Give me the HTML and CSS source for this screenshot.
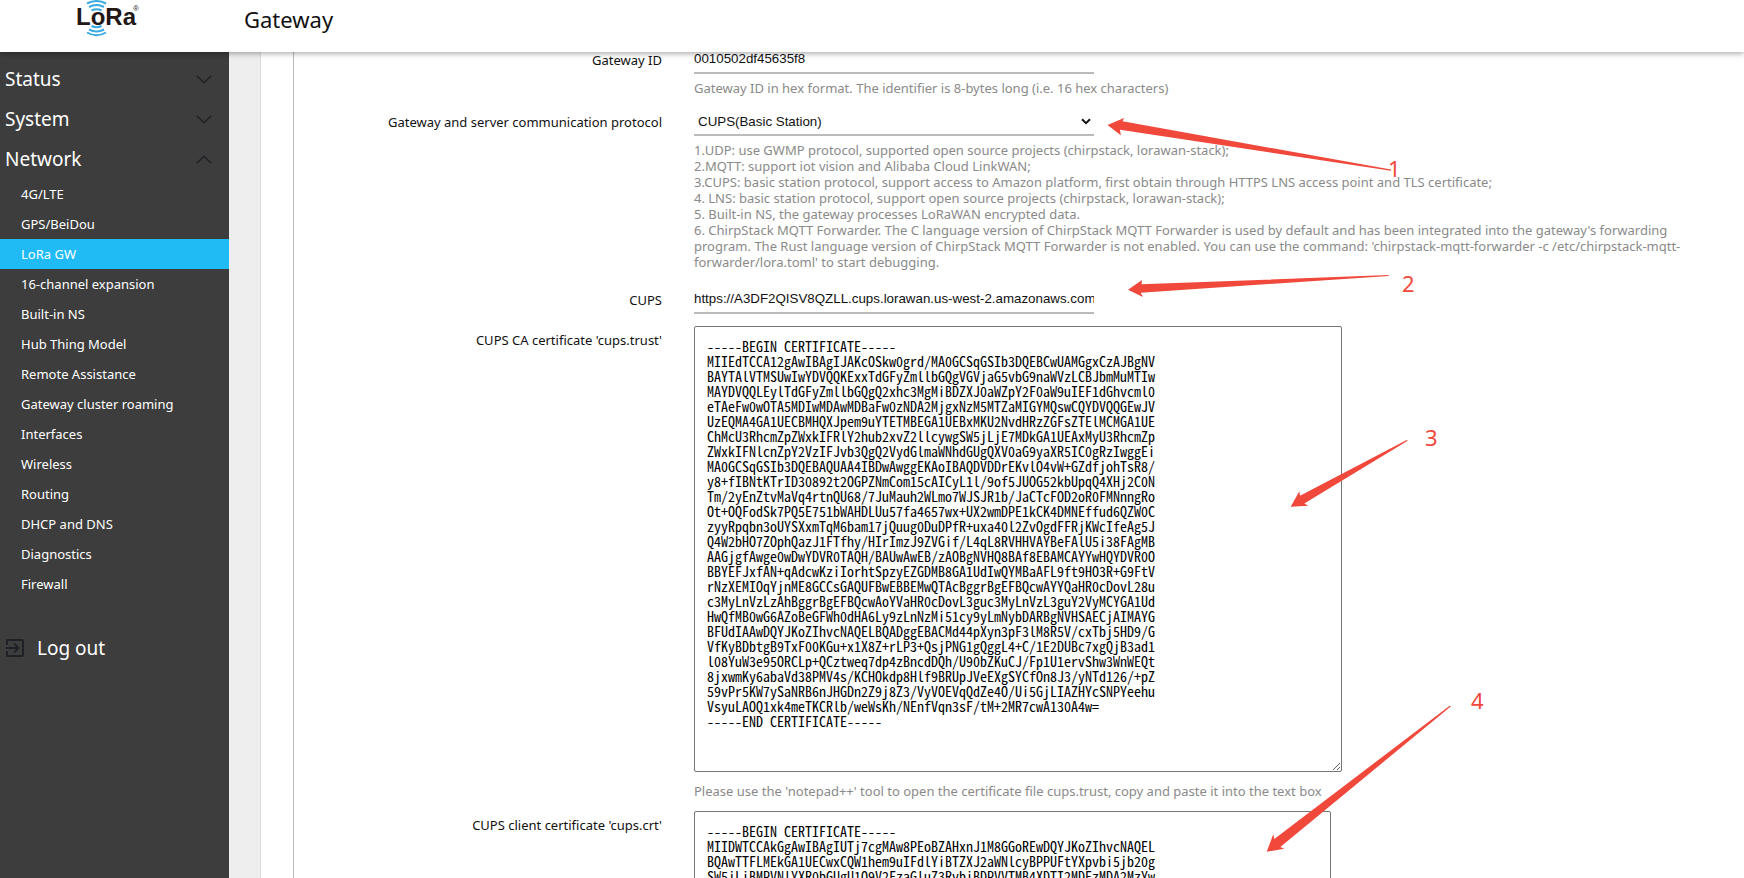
FILE: index.html
```html
<!DOCTYPE html>
<html lang="en">
<head>
<meta charset="utf-8">
<title>Gateway</title>
<link rel="stylesheet" href="styles.css">
</head>
<body>
<header class="topbar">
  <a class="brand" href="#" aria-label="LoRa home">
    <svg width="68" height="40" viewBox="0 0 68 40">
      <g fill="none" stroke="#3aaae0" stroke-width="2">
        <path d="M11 3.500Q20.500-1.500 30 3.500"/>
        <path d="M13 7Q20.500 3 28 7"/>
        <path d="M15.500 10.500Q20.500 8 25.500 10.500"/>
        <path d="M15.500 26Q20.500 28.500 25.500 26"/>
        <path d="M13 29.500Q20.500 33.500 28 29.500"/>
        <path d="M11 32.500Q20.500 38 30 32.500"/>
      </g>
      <text class="brand-name" x="0" y="25">LoRa</text>
      <text class="brand-mark" x="57" y="11">®</text>
    </svg>
  </a>
  <h1 class="title">Gateway</h1>
</header>
<div class="shell">
  <nav class="sidebar">
    <button class="group" type="button">Status<svg class="chev" viewBox="0 0 16 9"><path d="M.7.7 8 7.800 15.300.7"/></svg></button>
    <button class="group" type="button">System<svg class="chev" viewBox="0 0 16 9"><path d="M.7.7 8 7.800 15.300.7"/></svg></button>
    <button class="group" type="button">Network<svg class="chev" viewBox="0 0 16 9"><path d="M.7 8.300 8 1.200 15.300 8.300"/></svg></button>
    <ul class="items">
      <li><a href="#">4G/LTE</a></li>
      <li><a href="#">GPS/BeiDou</a></li>
      <li><a class="active" href="#">LoRa GW</a></li>
      <li><a href="#">16-channel expansion</a></li>
      <li><a href="#">Built-in NS</a></li>
      <li><a href="#">Hub Thing Model</a></li>
      <li><a href="#">Remote Assistance</a></li>
      <li><a href="#">Gateway cluster roaming</a></li>
      <li><a href="#">Interfaces</a></li>
      <li><a href="#">Wireless</a></li>
      <li><a href="#">Routing</a></li>
      <li><a href="#">DHCP and DNS</a></li>
      <li><a href="#">Diagnostics</a></li>
      <li><a href="#">Firewall</a></li>
    </ul>
    <a class="logout" href="#"><svg width="18" height="18" viewBox="0 0 18 18"><path d="M1 6V2q0-1 1-1h14q1 0 1 1v14q0 1-1 1H2q-1 0-1-1v-4M0 9h12M8 4.500 12.500 9 8 13.500"/></svg>Log out</a>
  </nav>
  <main class="page">
    <form class="panel">
      <div class="row">
        <label for="gwid">Gateway ID</label>
        <div class="field">
          <input class="line" id="gwid" type="text" value="0010502df45635f8">
          <p class="help">Gateway ID in hex format. The identifier is 8-bytes long (i.e. 16 hex characters)</p>
        </div>
      </div>
      <div class="row protocol">
        <label for="proto">Gateway and server communication protocol</label>
        <div class="field">
          <div class="select">
            <select class="line" id="proto"><option>CUPS(Basic Station)</option></select>
            <svg width="10" height="7" viewBox="0 0 10 7"><path d="M1 1.200 5 5.200 9 1.200"/></svg>
          </div>
          <p class="help">1.UDP: use GWMP protocol, supported open source projects (chirpstack, lorawan-stack);<br>2.MQTT: support iot vision and Alibaba Cloud LinkWAN;<br>3.CUPS: basic station protocol, support access to Amazon platform, first obtain through HTTPS LNS access point and TLS certificate;<br>4. LNS: basic station protocol, support open source projects (chirpstack, lorawan-stack);<br>5. Built-in NS, the gateway processes LoRaWAN encrypted data.<br>6. ChirpStack MQTT Forwarder. The C language version of ChirpStack MQTT Forwarder is used by default and has been integrated into the gateway's forwarding<br>program. The Rust language version of ChirpStack MQTT Forwarder is not enabled. You can use the command: 'chirpstack-mqtt-forwarder -c /etc/chirpstack-mqtt-<br>forwarder/lora.toml' to start debugging.</p>
        </div>
      </div>
      <div class="row server">
        <label for="cups">CUPS</label>
        <div class="field">
          <input class="line" id="cups" type="text" value="https://A3DF2QISV8QZLL.cups.lorawan.us-west-2.amazonaws.com:443">
        </div>
      </div>
      <div class="row cert">
        <label for="trust">CUPS CA certificate 'cups.trust'</label>
        <div class="field">
          <textarea id="trust" rows="28" spellcheck="false">-----BEGIN CERTIFICATE-----
MIIEdTCCA12gAwIBAgIJAKcOSkw0grd/MA0GCSqGSIb3DQEBCwUAMGgxCzAJBgNV
BAYTAlVTMSUwIwYDVQQKExxTdGFyZmllbGQgVGVjaG5vbG9naWVzLCBJbmMuMTIw
MAYDVQQLEylTdGFyZmllbGQgQ2xhc3MgMiBDZXJ0aWZpY2F0aW9uIEF1dGhvcml0
eTAeFw0wOTA5MDIwMDAwMDBaFw0zNDA2MjgxNzM5MTZaMIGYMQswCQYDVQQGEwJV
UzEQMA4GA1UECBMHQXJpem9uYTETMBEGA1UEBxMKU2NvdHRzZGFsZTElMCMGA1UE
ChMcU3RhcmZpZWxkIFRlY2hub2xvZ2llcywgSW5jLjE7MDkGA1UEAxMyU3RhcmZp
ZWxkIFNlcnZpY2VzIFJvb3QgQ2VydGlmaWNhdGUgQXV0aG9yaXR5IC0gRzIwggEi
MA0GCSqGSIb3DQEBAQUAA4IBDwAwggEKAoIBAQDVDDrEKvlO4vW+GZdfjohTsR8/
y8+fIBNtKTrID30892t2OGPZNmCom15cAICyL1l/9of5JUOG52kbUpqQ4XHj2C0N
Tm/2yEnZtvMaVq4rtnQU68/7JuMauh2WLmo7WJSJR1b/JaCTcFOD2oR0FMNnngRo
Ot+OQFodSk7PQ5E751bWAHDLUu57fa4657wx+UX2wmDPE1kCK4DMNEffud6QZW0C
zyyRpqbn3oUYSXxmTqM6bam17jQuug0DuDPfR+uxa40l2ZvOgdFFRjKWcIfeAg5J
Q4W2bHO7ZOphQazJ1FTfhy/HIrImzJ9ZVGif/L4qL8RVHHVAYBeFAlU5i38FAgMB
AAGjgfAwge0wDwYDVR0TAQH/BAUwAwEB/zAOBgNVHQ8BAf8EBAMCAYYwHQYDVR0O
BBYEFJxfAN+qAdcwKziIorhtSpzyEZGDMB8GA1UdIwQYMBaAFL9ft9HO3R+G9FtV
rNzXEMIOqYjnME8GCCsGAQUFBwEBBEMwQTAcBggrBgEFBQcwAYYQaHR0cDovL28u
c3MyLnVzLzAhBggrBgEFBQcwAoYVaHR0cDovL3guc3MyLnVzL3guY2VyMCYGA1Ud
HwQfMB0wG6AZoBeGFWh0dHA6Ly9zLnNzMi51cy9yLmNybDARBgNVHSAECjAIMAYG
BFUdIAAwDQYJKoZIhvcNAQELBQADggEBACMd44pXyn3pF3lM8R5V/cxTbj5HD9/G
VfKyBDbtgB9TxF00KGu+x1X8Z+rLP3+QsjPNG1gQggL4+C/1E2DUBc7xgQjB3ad1
l08YuW3e95ORCLp+QCztweq7dp4zBncdDQh/U90bZKuCJ/Fp1U1ervShw3WnWEQt
8jxwmKy6abaVd38PMV4s/KCHOkdp8Hlf9BRUpJVeEXgSYCfOn8J3/yNTd126/+pZ
59vPr5KW7ySaNRB6nJHGDn2Z9j8Z3/VyVOEVqQdZe4O/Ui5GjLIAZHYcSNPYeehu
VsyuLAOQ1xk4meTKCRlb/weWsKh/NEnfVqn3sF/tM+2MR7cwA130A4w=
-----END CERTIFICATE-----</textarea>
          <p class="help">Please use the 'notepad++' tool to open the certificate file cups.trust, copy and paste it into the text box</p>
        </div>
      </div>
      <div class="row cert">
        <label for="crt">CUPS client certificate 'cups.crt'</label>
        <div class="field">
          <textarea class="narrow" id="crt" rows="28" spellcheck="false">-----BEGIN CERTIFICATE-----
MIIDWTCCAkGgAwIBAgIUTj7cgMAw8PEoBZAHxnJ1M8GGoREwDQYJKoZIhvcNAQEL
BQAwTTFLMEkGA1UECwxCQW1hem9uIFdlYiBTZXJ2aWNlcyBPPUFtYXpvbi5jb20g
SW5jLiBMPVNlYXR0bGUgU1Q9V2FzaGluZ3RvbiBDPVVTMB4XDTI2MDEzMDA2MzYw</textarea>
        </div>
      </div>
    </form>
  </main>
</div>
<svg class="notes" width="1744" height="878" viewBox="0 0 1744 878">
  <path d="M1107.500 125 1124 118 1122.600 121.300 1391 169.500V170.700L1120 129.700 1120.800 135.300Z"/>
  <path d="M1128 289.700 1142 280 1141.600 284.300 1388.600 275V276L1140.700 292.700 1143 297Z"/>
  <path d="M1290.700 506.700 1299.300 491.300 1300 495.700 1406.700 440 1407.700 440.700 1304.300 503.500 1308.300 505.700Z"/>
  <path d="M1266.700 851.700 1273.300 834.300 1274.300 839 1449.700 705.700 1451 706.300 1280.300 847 1284.300 848.700Z"/>
  <text x="1388" y="177">1</text>
  <text x="1402" y="292">2</text>
  <text x="1425" y="446">3</text>
  <text x="1471" y="709">4</text>
</svg>
</body>
</html>
```
FILE: styles.css
```css
* {
  box-sizing: border-box;
}

body {
  margin: 0;
  height: 100vh;
  display: flex;
  flex-direction: column;
  overflow: hidden;
  position: relative;
  font-family: "Noto Sans", "Open Sans", sans-serif;
  font-size: 13px;
  color: #111;
  background: #fff;
}

.topbar {
  flex: none;
  display: flex;
  height: 52px;
  padding-left: 76px;
  background: #fff;
  box-shadow: 0 2px 5px rgba(0, 0, 0, 0.3);
  z-index: 1;
}

.brand {
  width: 168px;
}

.brand-name {
  font: bold 24px "Liberation Sans", sans-serif;
  fill: #231815;
}

.brand-mark {
  font: 8px "Liberation Sans", sans-serif;
  fill: #231815;
}

.title {
  margin: 0;
  font-size: 22px;
  line-height: 38px;
  font-weight: 400;
}

.shell {
  flex: 1;
  min-height: 0;
  display: flex;
  background: #eee;
}

.sidebar {
  flex: none;
  width: 229px;
  padding-top: 7px;
  background: #3d3d3d;
  color: #fff;
}

.group {
  display: flex;
  align-items: center;
  justify-content: space-between;
  width: 100%;
  height: 40px;
  padding: 0 17px 0 5px;
  border: 0;
  background: none;
  color: inherit;
  font-family: inherit;
  font-size: 19px;
}

.chev {
  width: 16px;
  height: 9px;
  fill: none;
  stroke: #1e2125;
  stroke-width: 1.4;
}

.items {
  margin: 0;
  padding: 0;
  list-style: none;
}

.items a {
  display: block;
  padding-left: 21px;
  line-height: 30px;
  color: #fff;
  text-decoration: none;
}

.items .active {
  background: #20bbf5;
}

.logout {
  display: flex;
  align-items: center;
  gap: 13px;
  margin-top: 30px;
  padding-left: 6px;
  line-height: 38px;
  font-size: 19px;
  color: #fff;
  text-decoration: none;
}

.logout svg {
  fill: none;
  stroke: #1e2125;
  stroke-width: 2;
}

.page {
  flex: 1;
  min-width: 0;
  margin-left: 31px;
  padding-left: 32px;
  border-left: 1px solid #ddd;
  background: #fff;
}

.panel {
  height: 100%;
  overflow: hidden;
  border-left: 1px solid #bbb;
}

.row {
  display: flex;
  gap: 32px;
  margin-bottom: 18px;
}

.row.protocol {
  margin-bottom: 22px;
}

.row.server {
  margin-bottom: 12px;
}

.row.cert {
  margin-bottom: 12px;
}

.row > label {
  flex: none;
  width: 368px;
  line-height: 16px;
  text-align: right;
}

.field {
  flex: 1;
  min-width: 0;
}

.line {
  display: block;
  width: 400px;
  height: 22px;
  padding: 0 0 8px;
  border: 0;
  border-bottom: 2px solid #bbb;
  border-radius: 0;
  background: none;
  color: #111;
  font-family: "Liberation Sans", sans-serif;
}

.select {
  position: relative;
  width: 400px;
}

.select select {
  appearance: none;
  padding: 0 0 5px 4px;
}

.select svg {
  position: absolute;
  right: 3px;
  top: 4px;
  fill: none;
  stroke: #111;
  stroke-width: 2;
  pointer-events: none;
}

.help {
  margin: 6px 0 0;
  line-height: 16px;
  color: #8a8a8a;
  white-space: nowrap;
}

.cert .help {
  margin-top: 11px;
}

.cert > label {
  padding-top: 6px;
}

textarea {
  display: block;
  width: 648px;
  padding: 12px;
  border: 1px solid #767676;
  border-radius: 2px;
  background: #fff;
  color: #000;
  font-family: "Noto Sans Mono CJK SC", "Liberation Mono", monospace;
  font-size: 14px;
  line-height: 15px;
  overflow: hidden;
}

.narrow {
  width: 637px;
}

.notes {
  position: absolute;
  left: 0;
  top: 0;
  z-index: 2;
  fill: #f1483c;
  font-family: "Noto Sans", sans-serif;
  font-size: 22px;
  pointer-events: none;
}
```
